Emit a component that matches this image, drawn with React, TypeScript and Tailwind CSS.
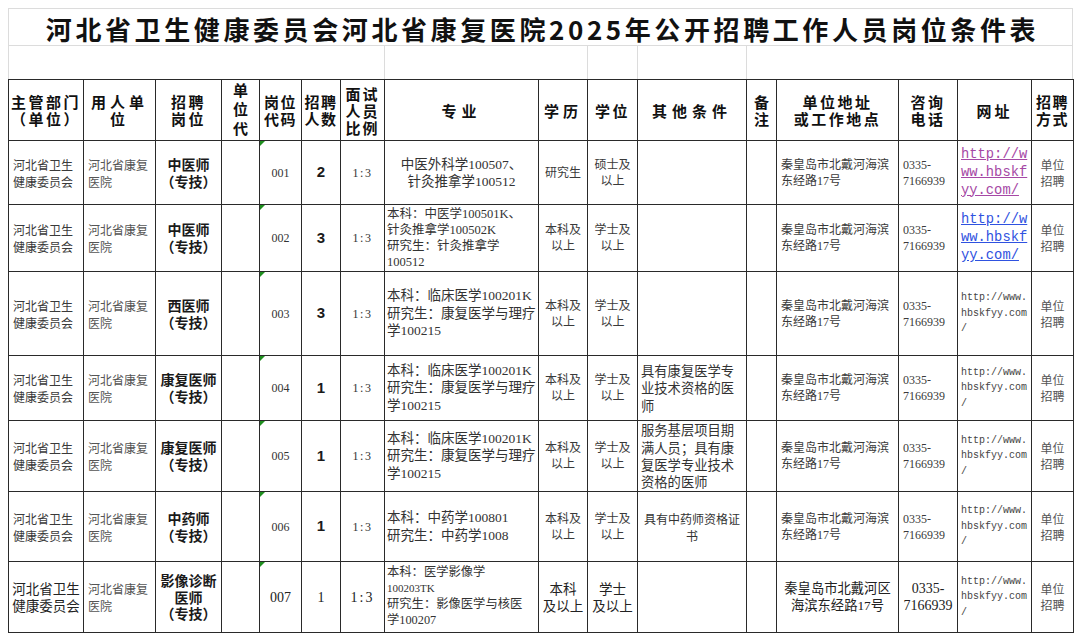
import React from "react";

const B = "border border-[#2a2a2a] p-0 align-middle";
const SANS = "font-['Noto_Sans_CJK_SC',sans-serif]";
const SERIF = "font-['Liberation_Serif','Noto_Sans_CJK_SC',serif]";
const MONO = "font-['Liberation_Mono','Noto_Sans_CJK_SC',monospace]";

function Tri() {
  return (
    <div className="absolute left-0 top-0 h-0 w-0 border-t-[5px] border-r-[5px] border-t-[#1f8f1f] border-r-transparent" />
  );
}

function Lines({ items }: { items: React.ReactNode[] }) {
  return (
    <>
      {items.map((t, i) => (
        <div key={i}>{t}</div>
      ))}
    </>
  );
}

type RowProps = {
  h: string;
  c3: string[];
  code: string;
  num: string;
  major: React.ReactNode;
  edu: string[];
  deg: string[];
  other?: React.ReactNode;
  url: React.ReactNode;
};

const c1Cls = `${B} ${SANS} pl-[4px] text-left text-[12px] leading-[17px] text-[#3a3a3a]`;
const c2Cls = `${B} ${SANS} pl-[4px] text-left text-[12px] leading-[17px] text-[#555]`;
const c3Cls = `${B} ${SANS} text-center text-[14px] font-bold leading-[17px] text-[#1a1a1a]`;
const codeCls = `${B} ${SERIF} relative text-center text-[12px] text-[#333]`;
const numCls = `${B} font-['Liberation_Sans',sans-serif] text-center text-[15px] font-bold text-[#1a1a1a]`;
const ratioCls = `${B} ${SERIF} text-center text-[12px] tracking-[1.5px] text-[#333]`;
const eduCls = `${B} ${SERIF} text-center text-[12px] leading-[16px] text-[#3a3a3a]`;
const addrCls = `${B} ${SERIF} pl-[4px] text-left text-[12px] leading-[16px] text-[#3a3a3a]`;
const phoneCls = `${B} ${SERIF} pl-[4px] text-left text-[12px] leading-[16px] text-[#3a3a3a]`;
const wayCls = `${B} ${SANS} text-center text-[12px] leading-[16px] text-[#555]`;

function SmallUrl() {
  return (
    <div className={`${MONO} pl-[3px] text-left text-[10px] leading-[15.5px] text-[#444]`}>
      <div>http://www.</div>
      <div>hbskfyy.com</div>
      <div>/</div>
    </div>
  );
}

function BigUrl({ color }: { color: string }) {
  return (
    <div className={`${MONO} pl-[3px] text-left text-[13.8px] leading-[18px] underline ${color}`}>
      <div>http://w</div>
      <div>ww.hbskf</div>
      <div>yy.com/</div>
    </div>
  );
}

function Row({ h, c3, code, num, major, edu, deg, other, url }: RowProps) {
  return (
    <tr className={h}>
      <td className={c1Cls}>
        <Lines items={["河北省卫生", "健康委员会"]} />
      </td>
      <td className={c2Cls}>
        <Lines items={["河北省康复", "医院"]} />
      </td>
      <td className={c3Cls}>
        <Lines items={c3} />
      </td>
      <td className={B}></td>
      <td className={codeCls}>
        <Tri />
        {code}
      </td>
      <td className={numCls}>{num}</td>
      <td className={ratioCls}>1:3</td>
      <td className={B}>{major}</td>
      <td className={eduCls}>
        <Lines items={edu} />
      </td>
      <td className={eduCls}>
        <Lines items={deg} />
      </td>
      <td className={B}>{other}</td>
      <td className={B}></td>
      <td className={addrCls}>
        <Lines items={["秦皇岛市北戴河海滨", "东经路17号"]} />
      </td>
      <td className={phoneCls}>
        <Lines items={["0335-", "7166939"]} />
      </td>
      <td className={B}>{url}</td>
      <td className={wayCls}>
        <Lines items={["单位", "招聘"]} />
      </td>
    </tr>
  );
}

const majorLeft = `${SERIF} pl-[2px] text-left text-[13.5px] leading-[17.5px] text-[#333]`;
const otherLeft = `${SANS} pl-[3px] text-left text-[13.3px] leading-[17.3px] text-[#333]`;

const H = `${B} ${SANS} text-center font-bold text-[15px] leading-[17px] text-[#111]`;

export default function App() {
  return (
    <div className="min-h-[634px] w-[1080px] bg-white pl-[8px] pt-[8px]">
      {/* Title band */}
      <div className="flex h-[37px] w-[1065px] items-center justify-center border border-b-0 border-[#dcdcdc]">
        <div className={`${SANS} pt-[3px] pl-[4px] text-[26px] font-bold tracking-[3.6px] text-[#111]`}>
          河北省卫生健康委员会河北省康复医院2025年公开招聘工作人员岗位条件表
        </div>
      </div>
      <div className="flex h-[34px] w-[1065px] border-x border-t border-[#dcdcdc]">
        <div className="w-[376px] border-r border-[#dcdcdc]" />
        <div className="w-[203px] border-r border-[#dcdcdc]" />
        <div className="w-[50px] border-r border-[#dcdcdc]" />
        <div className="w-[109px] border-r border-[#dcdcdc]" />
        <div className="flex-1" />
      </div>

      <table className="w-[1065px] table-fixed border-collapse">
        <colgroup>
          <col className="w-[75px]" />
          <col className="w-[72px]" />
          <col className="w-[66px]" />
          <col className="w-[38px]" />
          <col className="w-[42px]" />
          <col className="w-[39px]" />
          <col className="w-[44px]" />
          <col className="w-[154px]" />
          <col className="w-[49px]" />
          <col className="w-[50px]" />
          <col className="w-[109px]" />
          <col className="w-[30px]" />
          <col className="w-[122px]" />
          <col className="w-[59px]" />
          <col className="w-[74px]" />
          <col className="w-[42px]" />
        </colgroup>
        <tbody>
          <tr className="h-[61px]">
            <td className={`${H} tracking-[2.5px]`}>
              <div>主管部门</div>
              <div>（单位）</div>
            </td>
            <td className={`${H} tracking-[4px]`}>
              <div>用人单</div>
              <div>位</div>
            </td>
            <td className={`${H} tracking-[2.5px]`}>
              <div>招聘</div>
              <div>岗位</div>
            </td>
            <td className={`${B} align-top`}>
              <div className={`${SANS} h-[60px] overflow-hidden text-center text-[15px] font-bold leading-[19px] text-[#111]`}>
                <div>单</div>
                <div>位</div>
                <div>代</div>
                <div>码</div>
              </div>
            </td>
            <td className={`${H} tracking-[1.5px]`}>
              <div>岗位</div>
              <div>代码</div>
            </td>
            <td className={`${H} tracking-[1.5px]`}>
              <div>招聘</div>
              <div>人数</div>
            </td>
            <td className={`${H} leading-[16px] tracking-[2px]`}>
              <div>面试</div>
              <div>人员</div>
              <div>比例</div>
            </td>
            <td className={`${H} tracking-[5px]`}>专业</td>
            <td className={`${H} tracking-[4px]`}>学历</td>
            <td className={`${H} tracking-[2.5px]`}>学位</td>
            <td className={`${H} tracking-[5px]`}>其他条件</td>
            <td className={`${H}`}>
              <div>备</div>
              <div>注</div>
            </td>
            <td className={`${H} tracking-[2.5px]`}>
              <div>单位地址</div>
              <div>或工作地点</div>
            </td>
            <td className={`${H} tracking-[2.5px]`}>
              <div>咨询</div>
              <div>电话</div>
            </td>
            <td className={`${H} tracking-[3px]`}>网址</td>
            <td className={`${H} tracking-[1.5px]`}>
              <div>招聘</div>
              <div>方式</div>
            </td>
          </tr>

          <Row
            h="h-[64px]"
            c3={["中医师", "（专技）"]}
            code="001"
            num="2"
            major={
              <div className={`${SERIF} text-center text-[13.5px] leading-[17px] text-[#333]`}>
                <div>中医外科学100507、</div>
                <div>针灸推拿学100512</div>
              </div>
            }
            edu={["研究生"]}
            deg={["硕士及", "以上"]}
            url={<BigUrl color="text-[#a548a5]" />}
          />
          <Row
            h="h-[67px]"
            c3={["中医师", "（专技）"]}
            code="002"
            num="3"
            major={
              <div className={`${SERIF} pl-[2px] text-left text-[12.5px] leading-[16px] text-[#333]`}>
                <div>本科：中医学100501K、</div>
                <div>针灸推拿学100502K</div>
                <div>研究生：针灸推拿学</div>
                <div>100512</div>
              </div>
            }
            edu={["本科及", "以上"]}
            deg={["学士及", "以上"]}
            url={<BigUrl color="text-[#2f52e0]" />}
          />
          <Row
            h="h-[84px]"
            c3={["西医师", "（专技）"]}
            code="003"
            num="3"
            major={
              <div className={majorLeft}>
                <div>本科：临床医学100201K</div>
                <div>研究生：康复医学与理疗</div>
                <div>学100215</div>
              </div>
            }
            edu={["本科及", "以上"]}
            deg={["学士及", "以上"]}
            url={<SmallUrl />}
          />
          <Row
            h="h-[65px]"
            c3={["康复医师", "（专技）"]}
            code="004"
            num="1"
            major={
              <div className={majorLeft}>
                <div>本科：临床医学100201K</div>
                <div>研究生：康复医学与理疗</div>
                <div>学100215</div>
              </div>
            }
            edu={["本科及", "以上"]}
            deg={["学士及", "以上"]}
            other={
              <div className={otherLeft}>
                <div>具有康复医学专</div>
                <div>业技术资格的医</div>
                <div>师</div>
              </div>
            }
            url={<SmallUrl />}
          />
          <Row
            h="h-[71px]"
            c3={["康复医师", "（专技）"]}
            code="005"
            num="1"
            major={
              <div className={majorLeft}>
                <div>本科：临床医学100201K</div>
                <div>研究生：康复医学与理疗</div>
                <div>学100215</div>
              </div>
            }
            edu={["本科及", "以上"]}
            deg={["学士及", "以上"]}
            other={
              <div className={otherLeft}>
                <div>服务基层项目期</div>
                <div>满人员；具有康</div>
                <div>复医学专业技术</div>
                <div>资格的医师</div>
              </div>
            }
            url={<SmallUrl />}
          />
          <Row
            h="h-[70px]"
            c3={["中药师", "（专技）"]}
            code="006"
            num="1"
            major={
              <div className={`${SERIF} pl-[2px] text-left text-[13.5px] leading-[18px] text-[#333]`}>
                <div>本科：中药学100801</div>
                <div>研究生：中药学1008</div>
              </div>
            }
            edu={["本科及", "以上"]}
            deg={["学士及", "以上"]}
            other={
              <div className={`${SANS} text-center text-[12px] leading-[17px] text-[#333]`}>
                <div>具有中药师资格证</div>
                <div>书</div>
              </div>
            }
            url={<SmallUrl />}
          />

          <tr className="h-[71px]">
            <td className={`${B} ${SANS} text-center text-[13.5px] leading-[17px] text-[#222]`}>
              <div>河北省卫生</div>
              <div>健康委员会</div>
            </td>
            <td className={c2Cls}>
              <div>河北省康复</div>
              <div>医院</div>
            </td>
            <td className={`${B} ${SANS} text-center text-[14px] font-bold leading-[16.5px] text-[#1a1a1a]`}>
              <div>影像诊断</div>
              <div>医师</div>
              <div>（专技）</div>
            </td>
            <td className={B}></td>
            <td className={`${B} ${SERIF} relative text-center text-[14px] text-[#222]`}>
              <Tri />
              007
            </td>
            <td className={`${B} ${SERIF} text-center text-[14px] text-[#222]`}>1</td>
            <td className={`${B} ${SERIF} text-center text-[14px] tracking-[2px] text-[#222]`}>1:3</td>
            <td className={B}>
              <div className={`${SERIF} pl-[2px] text-left text-[12.3px] leading-[15.8px] text-[#333]`}>
                <div>本科：医学影像学</div>
                <div className="text-[11px]">100203TK</div>
                <div>研究生：影像医学与核医</div>
                <div>学100207</div>
              </div>
            </td>
            <td className={`${B} ${SANS} text-center text-[13.5px] leading-[17px] text-[#222]`}>
              <div>本科</div>
              <div>及以上</div>
            </td>
            <td className={`${B} ${SANS} text-center text-[13.5px] leading-[17px] text-[#222]`}>
              <div>学士</div>
              <div>及以上</div>
            </td>
            <td className={B}></td>
            <td className={B}></td>
            <td className={`${B} ${SERIF} text-center text-[13.3px] leading-[17px] text-[#222]`}>
              <div>秦皇岛市北戴河区</div>
              <div>海滨东经路17号</div>
            </td>
            <td className={`${B} ${SERIF} text-center text-[14px] leading-[17px] text-[#222]`}>
              <div>0335-</div>
              <div>7166939</div>
            </td>
            <td className={B}>
              <SmallUrl />
            </td>
            <td className={wayCls}>
              <div>单位</div>
              <div>招聘</div>
            </td>
          </tr>
        </tbody>
      </table>
    </div>
  );
}
